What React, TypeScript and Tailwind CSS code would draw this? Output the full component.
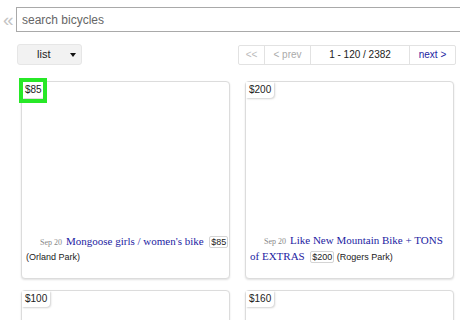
const listings = [
  {
    price: "$85",
    date: "Sep 20",
    title: "Mongoose girls / women's bike",
    hood: "(Orland Park)",
    marked: true
  },
  {
    price: "$200",
    date: "Sep 20",
    title: "Like New Mountain Bike + TONS of EXTRAS",
    hood: "(Rogers Park)",
    marked: false
  },
  { price: "$100", date: "Sep 20", title: "", hood: "", marked: false },
  { price: "$160", date: "Sep 20", title: "", hood: "", marked: false }
];

function Card({ item }: { item: (typeof listings)[number] }) {
  return (
    <article className="relative flex h-[198px] flex-col rounded-[4px] border border-[#dcdcdc] bg-white shadow-[0_1px_2px_rgba(0,0,0,0.12)]">
      <span className="absolute left-0 top-0 h-[16px] rounded-br-[4px] bg-white px-[3px] text-[10px] leading-[16px] text-[#222] shadow-[1px_1px_2px_rgba(0,0,0,0.18)]">
        {item.price}
      </span>
      {item.marked && (
        <span className="absolute left-[-3px] top-[-4px] h-[25px] w-[28px] border-4 border-[#27e827]" />
      )}
      <div className="flex-1" />
      {item.title && (
        <p className="pb-[13px] pl-[4px] indent-[14px] text-[9px] leading-[15px] text-[#222]">
          <span className="mr-[1.5px] font-['Liberation_Serif',serif] text-[8px] text-[#888]">{item.date}</span>{" "}
          <span className="mr-[3px] font-['Liberation_Serif',serif] text-[11px] text-[#1c1ca2]">{item.title}</span>{" "}
          <span className="rounded-[2px] border border-[#d4d4d4] px-[1px]">{item.price}</span>{" "}
          {item.hood}
        </p>
      )}
    </article>
  );
}

export default function App() {
  return (
    <div className="h-[320px] w-[460px] overflow-hidden bg-white font-['Liberation_Sans',Arial,sans-serif]">
      <div className="flex items-center pl-[3px] pt-[7px]">
        <span className="w-[13px] text-[19px] leading-none text-[#c4c4c4]">«</span>
        <div className="-mr-4 flex h-[25px] flex-1 items-center border border-[#a9a9a9] pl-[5px] text-[12px] text-[#666]">
          search bicycles
        </div>
      </div>

      <div className="mt-[12px] flex items-center justify-between pl-[17px] pr-[4px]">
        <div className="flex h-[21px] w-[65px] items-center rounded-[3px] border border-[#e6e6e6] bg-[#f2f2f2] pl-[19px] text-[11px] text-[#222]">
          list
          <span className="ml-auto mr-[5px] border-x-[3px] border-t-[4px] border-x-transparent border-t-[#111]" />
        </div>
        <div className="flex h-[20px] rounded-[2px] border border-[#e2e2e2] text-[10px]">
          <span className="flex w-[25px] items-center justify-center text-[#bbb]">&lt;&lt;</span>
          <span className="flex w-[46px] items-center justify-center border-l border-[#e2e2e2] text-[#aaa]">&lt; prev</span>
          <span className="flex w-[99px] items-center justify-center border-l border-[#e2e2e2] text-[#222]">1 - 120 / 2382</span>
          <span className="flex w-[46px] items-center justify-center border-l border-[#e2e2e2] text-[#1c1ca2]">next &gt;</span>
        </div>
      </div>

      <div className="mt-[16px] grid grid-cols-[209px_209px] gap-x-[15px] gap-y-[11px] pl-[21px]">
        {listings.map((item) => (
          <Card item={item} key={item.price} />
        ))}
      </div>
    </div>
  );
}
